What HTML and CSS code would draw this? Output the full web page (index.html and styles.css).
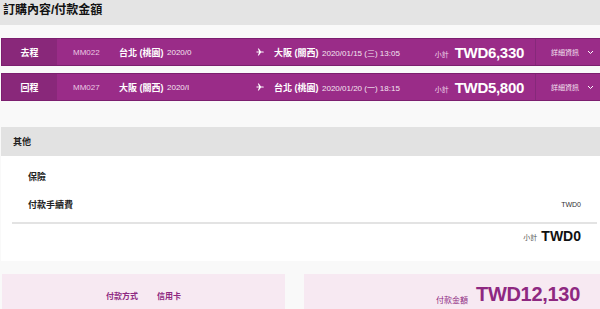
FILE: index.html
```html
<!DOCTYPE html>
<html>
  <head>
    <title>訂購內容/付款金額</title>
    <meta charset="UTF-8" />
    <link rel="stylesheet" href="styles.css">
  </head>
  <body>
    <div class="page-title">
      <h1>訂購內容/付款金額</h1>
    </div>

    <div class="flights">
      <div class="flight">
        <div class="leg">去程</div>
        <div class="info">
          <span class="code">MM022</span>
          <div class="dep">
            <span class="city">台北 (桃園)</span>
            <span class="date cut">2020/0</span>
          </div>
          <span class="plane">
            <svg width="8" height="8" viewBox="0 0 8 8"><path d="M0.5 3.4h2.6L1.8 0.6h1L5 3.4h2.2c0.4 0 0.6 0.3 0.6 0.6s-0.2 0.6-0.6 0.6H5L2.8 7.4h-1l1.3-2.8H0.5z" fill="#fff"/></svg>
          </span>
          <span class="city">大阪 (關西)</span>
          <span class="date">2020/01/15 (三) 13:05</span>
          <span class="sub">小計</span>
          <span class="price">TWD6,330</span>
        </div>
        <div class="detail">詳細資訊
          <svg width="7" height="5" viewBox="0 0 7 5"><path d="M1 1l2.5 2.5L6 1" fill="none" stroke="#fff" stroke-width="1"/></svg>
        </div>
      </div>

      <div class="flight">
        <div class="leg">回程</div>
        <div class="info">
          <span class="code">MM027</span>
          <div class="dep">
            <span class="city">大阪 (關西)</span>
            <span class="date cut">2020/I</span>
          </div>
          <span class="plane">
            <svg width="8" height="8" viewBox="0 0 8 8"><path d="M0.5 3.4h2.6L1.8 0.6h1L5 3.4h2.2c0.4 0 0.6 0.3 0.6 0.6s-0.2 0.6-0.6 0.6H5L2.8 7.4h-1l1.3-2.8H0.5z" fill="#fff"/></svg>
          </span>
          <span class="city">台北 (桃園)</span>
          <span class="date">2020/01/20 (一) 18:15</span>
          <span class="sub">小計</span>
          <span class="price">TWD5,800</span>
        </div>
        <div class="detail">詳細資訊
          <svg width="7" height="5" viewBox="0 0 7 5"><path d="M1 1l2.5 2.5L6 1" fill="none" stroke="#fff" stroke-width="1"/></svg>
        </div>
      </div>
    </div>

    <div class="other">
      <div class="other-head">其他</div>
      <div class="other-body">
        <div class="row">
          <span class="label">保險</span>
        </div>
        <div class="row">
          <span class="label">付款手續費</span>
          <span class="value">TWD0</span>
        </div>
        <div class="line"></div>
        <div class="row total">
          <span class="sub dark">小計</span>
          <span class="total-price">TWD0</span>
        </div>
      </div>
    </div>

    <div class="pay">
      <div class="pay-box method">
        <span>付款方式</span>
        <span>信用卡</span>
      </div>
      <div class="pay-box amount">
        <span class="amount-label">付款金額</span>
        <span class="amount-price">TWD12,130</span>
      </div>
    </div>
  </body>
</html>
```

FILE: styles.css
```css
*{
    margin: 0;
    padding: 0;
    box-sizing: border-box;
    font-family: "Liberation Sans", "Noto Sans CJK TC", sans-serif;
}
body{
    background: #f9f9f9;
    width: 600px;
    overflow: hidden;
}
.page-title{
    background: #e4e4e4;
    height: 25px;
    padding: 3px 0 0 3px;
}
h1{
    font-size: 12px;
    font-weight: bold;
    color: #111;
    line-height: 14px;
}

.flights{
    margin-top: 13px;
    padding-left: 1px;
}
.flight{
    display: flex;
    height: 28px;
    background: #9a2c88;
    border: 1px solid #7c1f6f;
    border-right: none;
    color: #fff;
    margin-bottom: 7px;
}
.leg{
    width: 55px;
    background: #89287a;
    display: flex;
    align-items: center;
    justify-content: center;
    font-size: 9px;
    font-weight: bold;
}
.info{
    flex: 1;
    display: flex;
    align-items: center;
    padding-left: 16px;
    white-space: nowrap;
}
.code{
    width: 46px;
    font-size: 8px;
    color: #eac9e3;
}
.dep{
    width: 137px;
    display: flex;
    align-items: center;
}
.city{
    width: 48px;
    font-size: 9px;
    font-weight: bold;
}
.date{
    font-size: 8px;
    color: #f4e4f0;
}
.cut{
    width: 27px;
}
.plane{
    width: 18px;
    display: flex;
    align-items: center;
}
.sub{
    margin-left: auto;
    margin-right: 6px;
    font-size: 7px;
    color: #f0d9eb;
    padding-top: 3px;
}
.price{
    font-size: 15px;
    font-weight: bold;
    margin-right: 11px;
    letter-spacing: -0.3px;
}
.detail{
    width: 65px;
    border-left: 1px solid #86297a;
    display: flex;
    align-items: center;
    gap: 8px;
    padding-left: 15px;
    font-size: 7px;
    color: #f6e6f2;
}

.other{
    margin-top: 26px;
    padding-left: 1px;
}
.other-head{
    background: #e2e2e2;
    height: 29px;
    display: flex;
    align-items: center;
    padding-left: 12px;
    font-size: 9px;
    font-weight: bold;
    color: #222;
}
.other-body{
    background: #fff;
    height: 105px;
    padding-top: 6px;
}
.row{
    height: 28px;
    display: flex;
    align-items: center;
    padding: 0 19px 0 27px;
}
.label{
    font-size: 9px;
    font-weight: bold;
    color: #222;
}
.value{
    margin-left: auto;
    font-size: 7px;
    color: #333;
}
.line{
    height: 2px;
    background: #e3e3e3;
    margin: 4px 3px 0 11px;
}
.row.total{
    height: 24px;
    justify-content: flex-end;
}
.sub.dark{
    margin-left: 0;
    margin-right: 4px;
    color: #555;
    padding-top: 2px;
}
.total-price{
    font-size: 14px;
    font-weight: bold;
    color: #111;
}

.pay{
    display: flex;
    gap: 19px;
    margin-top: 13px;
    padding-left: 2px;
}
.pay-box{
    height: 50px;
    background: #f7e9f2;
    display: flex;
    padding-top: 13px;
    color: #8e2881;
}
.method{
    width: 283px;
    justify-content: center;
    gap: 19px;
    font-size: 8px;
    font-weight: bold;
    padding-top: 16px;
}
.amount{
    flex: 1;
    justify-content: flex-end;
    align-items: flex-start;
    padding-right: 20px;
    padding-top: 8px;
}
.amount-label{
    font-size: 8px;
    margin-right: 8px;
    padding-top: 12px;
}
.amount-price{
    font-size: 20px;
    font-weight: bold;
    line-height: 24px;
    letter-spacing: -0.3px;
}
```
